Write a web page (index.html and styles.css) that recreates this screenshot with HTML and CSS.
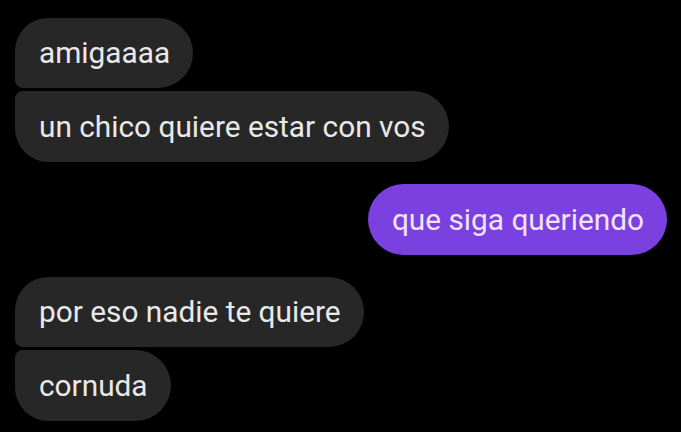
FILE: index.html
```html
<!DOCTYPE html>
<html lang="es">
<head>
<meta charset="utf-8">
<link rel="stylesheet" href="styles.css">
</head>
<body>
<main class="chat">
  <div class="group in">
    <div class="bubble first">amigaaaa</div>
    <div class="bubble last">un chico quiere estar con vos</div>
  </div>
  <div class="group out">
    <div class="bubble mine">que siga queriendo</div>
  </div>
  <div class="group in">
    <div class="bubble first">por eso nadie te quiere</div>
    <div class="bubble last">cornuda</div>
  </div>
</main>
</body>
</html>
```
FILE: styles.css
```css
html, body {
  margin: 0;
  padding: 0;
  background: #000;
  width: 681px;
  height: 432px;
  overflow: hidden;
}
.chat {
  display: flex;
  flex-direction: column;
  gap: 22px;
  padding: 18px 14px 0 15px;
  font-family: Roboto, "Noto Sans", sans-serif;
  font-size: 29.8px;
}
.group {
  display: flex;
  flex-direction: column;
  gap: 3px;
}
.group.in { align-items: flex-start; }
.group.out { align-items: flex-end; }
.bubble {
  height: 71px;
  line-height: 71px;
  padding: 0 23px 0 24px;
  background: #272727;
  color: #e9e9e9;
  border-radius: 36px;
  white-space: nowrap;
}
.bubble.first { border-radius: 34px 36px 36px 8px; height: 70px; line-height: 70px; }
.bubble.last { border-radius: 8px 36px 36px 34px; }
.bubble.mine {
  background: #7a40e0;
  color: #f3e2fb;
  border-radius: 36px;
}
```
